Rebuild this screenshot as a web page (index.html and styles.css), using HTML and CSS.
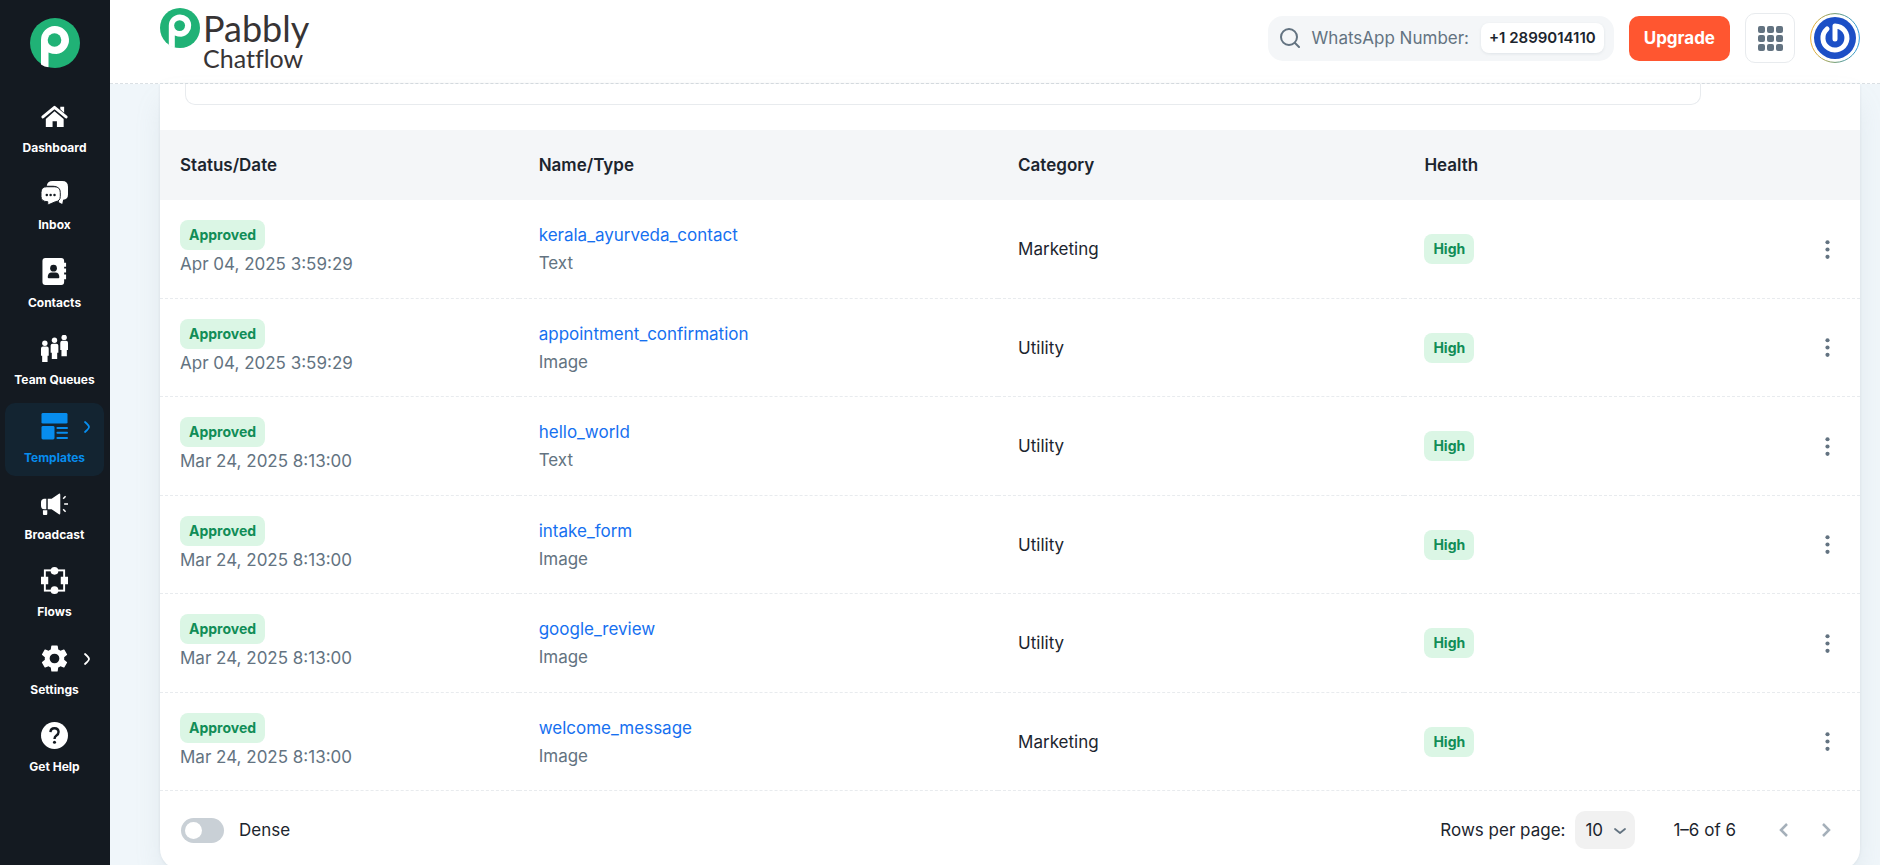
FILE: index.html
```html
<!DOCTYPE html>
<html lang="en">
<head>
  <meta charset="UTF-8">
  <meta name="viewport" content="width=device-width, initial-scale=1.0">
  <title>Templates | Pabbly Chatflow</title>
  <link rel="stylesheet" href="styles.css">
</head>
<body>
  <svg class="defs" width="0" height="0" aria-hidden="true">
    <symbol id="pabbly" viewBox="0 0 50 50">
      <circle cx="25" cy="25" r="25" fill="#20b276"/>
      <path d="M11 22v24.500q3.500 2.600 7.500 2.800V34.500q3.500 1.500 8 1.500A14 14 0 1 0 11 22z" fill="#fff"/>
      <circle cx="24.500" cy="22" r="6.800" fill="#20b276"/>
    </symbol>
    <symbol id="dots" viewBox="0 0 24 24">
      <circle cx="12" cy="5" r="2"/><circle cx="12" cy="12" r="2"/><circle cx="12" cy="19" r="2"/>
    </symbol>
    <symbol id="chevron" viewBox="0 0 8 14">
      <path d="M2 2q4 3.500 4 5t-4 5" fill="none" stroke="currentColor" stroke-width="1.800" stroke-linecap="round"/>
    </symbol>
  </svg>

  <aside class="sidebar">
    <a class="brand" href="#" aria-label="Pabbly"><svg width="50" height="50"><use href="#pabbly"/></svg></a>
    <nav class="nav">
      <a class="nav-item" href="#">
        <svg class="nav-icon" viewBox="0 0 28 28"><path d="M20 4h4v6l-4-3.500z"/><path d="M2 14.500 14 4.500l12 10" fill="none" stroke="currentColor" stroke-width="3" stroke-linecap="round" stroke-linejoin="round"/><path d="M14 8.500 23.500 16.500V25h-7v-6h-4.500v6H5v-8.500z"/></svg>
        <span>Dashboard</span>
      </a>
      <a class="nav-item" href="#">
        <svg class="nav-icon" viewBox="0 0 28 28"><path d="M6 6q.5-5 6-5h10q6 0 6 6v8q0 5-5 5.500l-1 4.500-3.500-2V12q0-6-6-6z"/><path class="cut" d="M6 7h8q6 0 6 6v4q0 5-5 5.500l-8 3.500v-3.500q-7 0-7-5.500v-4q0-6 6-6z"/><g class="cutout"><circle cx="6" cy="15.500" r="1.300"/><circle cx="10" cy="15.500" r="1.300"/><circle cx="14" cy="15.500" r="1.300"/></g></svg>
        <span>Inbox</span>
      </a>
      <a class="nav-item" href="#">
        <svg class="nav-icon" viewBox="0 0 28 28"><path d="M4.500 0H21q3 0 3 3v2h2v4h-2v2h2v4h-2v2h2v5h-2v3q0 3-3 3H4.500Q1.500 28 1.500 25V3q0-3 3-3z"/><g class="cutout"><circle cx="13" cy="10.500" r="3.500"/><path d="M7 20q0-5 4-5h4q4 0 4 5 0 1-1 1H8q-1 0-1-1z"/></g></svg>
        <span>Contacts</span>
      </a>
      <a class="nav-item" href="#">
        <svg class="nav-icon" viewBox="0 0 28 28"><g id="person"><circle cx="4" cy="8.500" r="2.800"/><path d="M2 12h4q2 0 2 2v7.500H6.800V28H1.200v-6.500H0V14q0-2 2-2z"/></g><use href="#person" x="10" y="-3"/><use href="#person" x="20" y="-6"/></svg>
        <span>Team Queues</span>
      </a>
      <a class="nav-item active" href="#" aria-current="page">
        <svg class="nav-icon" viewBox="0 0 28 28"><rect x=".5" width="27" height="11" rx="1.500"/><rect x=".5" y="13.500" width="13.500" height="14" rx="1.500"/><path d="M17 15.500h10M17 20.500h10M17 26h10" fill="none" stroke="currentColor" stroke-width="2" stroke-linecap="round"/></svg>
        <span>Templates</span>
        <svg class="nav-arrow"><use href="#chevron"/></svg>
      </a>
      <a class="nav-item" href="#">
        <svg class="nav-icon" viewBox="0 0 28 28"><path d="M19 3.500q1 0 1 1.500v19q0 1.500-1 1.500L11 20H7V9h4zM5.500 9v11H3q-3-.5-3-4v-3q0-3.500 3-4zM2 21h4.500v4q0 1-1 1H3q-1 0-1-1z"/><path d="M24 14.500h4M23 9l2.500-2.500M23 20l2.500 2.500" stroke="currentColor" stroke-width="1.600"/></svg>
        <span>Broadcast</span>
      </a>
      <a class="nav-item" href="#">
        <svg class="nav-icon" viewBox="0 0 28 28"><rect x="4" y="3.500" width="20" height="21" fill="none" stroke="currentColor" stroke-width="2"/><circle cx="14" cy="4" r="4"/><circle cx="14" cy="24" r="4"/><path d="M0 10h7.500v8H0zM20.500 10H28v8h-7.500z"/></svg>
        <span>Flows</span>
      </a>
      <a class="nav-item" href="#">
        <svg class="nav-icon" viewBox="2 2 20 20"><path d="M19.140 12.940c.04-.3.060-.61.060-.94 0-.32-.02-.64-.07-.94l2.030-1.580a.49.490 0 0 0 .12-.61l-1.920-3.320a.488.488 0 0 0-.59-.22l-2.390.96c-.5-.38-1.030-.7-1.620-.94l-.36-2.540a.484.484 0 0 0-.48-.41h-3.840c-.24 0-.43.170-.47.410l-.36 2.540c-.59.240-1.130.57-1.620.94l-2.390-.96c-.22-.08-.47 0-.59.220L2.740 8.870c-.12.210-.08.470.12.610l2.030 1.580c-.05.3-.09.630-.09.940s.02.640.07.940l-2.030 1.580a.49.490 0 0 0-.12.610l1.920 3.320c.12.220.37.290.59.220l2.390-.96c.5.380 1.030.7 1.620.94l.36 2.540c.05.240.24.410.48.410h3.840c.24 0 .44-.17.470-.41l.36-2.540c.59-.24 1.130-.56 1.620-.94l2.390.96c.22.080.47 0 .59-.22l1.920-3.320c.12-.22.070-.47-.12-.61zM12 15.600A3.600 3.600 0 1 1 12 8.400a3.600 3.600 0 0 1 0 7.200z"/></svg>
        <span>Settings</span>
        <svg class="nav-arrow"><use href="#chevron"/></svg>
      </a>
      <a class="nav-item" href="#">
        <svg class="nav-icon" viewBox="0 0 28 28"><circle cx="14" cy="14" r="14"/><path class="question" d="M9.800 10.500Q10 6.500 14 6.500t4.200 3.800q0 2.200-2.200 3.600-2 1.400-2 3.600"/><circle class="cutout" cx="14" cy="21" r="1.600"/></svg>
        <span>Get Help</span>
      </a>
    </nav>
  </aside>

  <div class="page">
    <header class="topbar">
      <a class="logo" href="#">
        <svg width="40" height="40"><use href="#pabbly"/></svg>
        <span class="logo-text"><span class="logo-name">Pabbly</span><span class="logo-product">Chatflow</span></span>
      </a>
      <div class="actions">
        <button class="number" type="button">
          <svg class="search" width="20" height="20" viewBox="0 0 20 20"><circle cx="9" cy="9" r="8"/><path d="m15 15 4 4"/></svg>
          <span>WhatsApp Number:</span>
          <b class="number-value">+1 2899014110</b>
        </button>
        <button class="upgrade" type="button">Upgrade</button>
        <button class="apps" type="button" aria-label="Apps">
          <svg width="25" height="25" viewBox="0 0 25 25"><g id="apps-row"><rect width="7" height="7" rx="2"/><rect x="9" width="7" height="7" rx="2"/><rect x="18" width="7" height="7" rx="2"/></g><use href="#apps-row" y="9"/><use href="#apps-row" y="18"/></svg>
        </button>
        <button class="avatar" type="button" aria-label="Account">
          <svg width="50" height="50" viewBox="0 0 50 50">
            <defs><linearGradient id="ring"><stop offset="0" stop-color="#f3b234"/><stop offset=".5" stop-color="#6d9a70"/><stop offset="1" stop-color="#2f9be0"/></linearGradient></defs>
            <circle cx="25" cy="25" r="24.400" fill="#fff" stroke="url(#ring)"/>
            <circle cx="25" cy="25" r="21" fill="#1c4fc6"/>
            <path d="M25 26V13A12 12 0 1 1 17 16" fill="none" stroke="#fff" stroke-width="5" stroke-linecap="round" stroke-linejoin="round"/>
          </svg>
        </button>
      </div>
    </header>

    <main class="content">
      <section class="card">
        <div class="filters"></div>
        <table class="templates">
          <thead>
            <tr>
              <th class="col-status">Status/Date</th>
              <th class="col-name">Name/Type</th>
              <th class="col-category">Category</th>
              <th colspan="2">Health</th>
            </tr>
          </thead>
          <tbody>
            <tr>
              <td><span class="label">Approved</span><div class="muted">Apr 04, 2025 3:59:29</div></td>
              <td><a href="#">kerala_ayurveda_contact</a><div class="muted">Text</div></td>
              <td>Marketing</td>
              <td><span class="label">High</span></td>
              <td><button class="menu" type="button" aria-label="More"><svg><use href="#dots"/></svg></button></td>
            </tr>
            <tr>
              <td><span class="label">Approved</span><div class="muted">Apr 04, 2025 3:59:29</div></td>
              <td><a href="#">appointment_confirmation</a><div class="muted">Image</div></td>
              <td>Utility</td>
              <td><span class="label">High</span></td>
              <td><button class="menu" type="button" aria-label="More"><svg><use href="#dots"/></svg></button></td>
            </tr>
            <tr>
              <td><span class="label">Approved</span><div class="muted">Mar 24, 2025 8:13:00</div></td>
              <td><a href="#">hello_world</a><div class="muted">Text</div></td>
              <td>Utility</td>
              <td><span class="label">High</span></td>
              <td><button class="menu" type="button" aria-label="More"><svg><use href="#dots"/></svg></button></td>
            </tr>
            <tr>
              <td><span class="label">Approved</span><div class="muted">Mar 24, 2025 8:13:00</div></td>
              <td><a href="#">intake_form</a><div class="muted">Image</div></td>
              <td>Utility</td>
              <td><span class="label">High</span></td>
              <td><button class="menu" type="button" aria-label="More"><svg><use href="#dots"/></svg></button></td>
            </tr>
            <tr>
              <td><span class="label">Approved</span><div class="muted">Mar 24, 2025 8:13:00</div></td>
              <td><a href="#">google_review</a><div class="muted">Image</div></td>
              <td>Utility</td>
              <td><span class="label">High</span></td>
              <td><button class="menu" type="button" aria-label="More"><svg><use href="#dots"/></svg></button></td>
            </tr>
            <tr>
              <td><span class="label">Approved</span><div class="muted">Mar 24, 2025 8:13:00</div></td>
              <td><a href="#">welcome_message</a><div class="muted">Image</div></td>
              <td>Marketing</td>
              <td><span class="label">High</span></td>
              <td><button class="menu" type="button" aria-label="More"><svg><use href="#dots"/></svg></button></td>
            </tr>
          </tbody>
        </table>
        <footer class="table-footer">
          <label class="dense"><input class="switch" type="checkbox">Dense</label>
          <div class="pagination">
            <label for="rows">Rows per page:</label>
            <div class="select">
              <select id="rows"><option>10</option><option>25</option><option>50</option></select>
              <svg class="select-arrow" viewBox="0 0 12 6"><path d="m1 1 5 4 5-4" fill="none" stroke="currentColor" stroke-width="1.800" stroke-linecap="round" stroke-linejoin="round"/></svg>
            </div>
            <span class="range">1–6 of 6</span>
            <button class="page-btn" type="button" aria-label="Previous page" disabled><svg width="10" height="16" viewBox="0 0 10 16"><path d="M8 2 2 8l6 6"/></svg></button>
            <button class="page-btn" type="button" aria-label="Next page" disabled><svg width="10" height="16" viewBox="0 0 10 16"><path d="m2 2 6 6-6 6"/></svg></button>
          </div>
        </footer>
      </section>
    </main>
  </div>
</body>
</html>
```
FILE: styles.css
```css
* {
  box-sizing: border-box;
}

body {
  margin: 0;
  display: flex;
  height: 100vh;
  overflow: hidden;
  font-family: Inter, "Liberation Sans", sans-serif;
  font-size: 17px;
  line-height: 28px;
  color: #1c252e;
  background-color: #f0f6fa;
}

a {
  color: #1670f0;
  text-decoration: none;
}

button {
  border: none;
  padding: 0;
  background: none;
  font: inherit;
  color: #637381;
  cursor: pointer;
}

svg {
  display: block;
  fill: currentColor;
}

.defs {
  position: absolute;
}

/* sidebar */
.sidebar {
  width: 110px;
  flex-shrink: 0;
  padding: 18px 5px 0;
  color: #fff;
  background-color: #141a21;
}

.brand {
  display: flex;
  justify-content: center;
  margin-bottom: 25px;
}

.nav {
  display: flex;
  flex-direction: column;
  justify-content: space-between;
  height: 80vh;
}

.nav-item {
  position: relative;
  display: flex;
  flex-direction: column;
  align-items: center;
  gap: 8px;
  height: 73px;
  margin-right: 1px;
  padding-top: 10px;
  border-radius: 10px;
  font-size: 12px;
  font-weight: 700;
  line-height: 20px;
  color: #fff;
}

.nav-item.active {
  color: #078dee;
  background-color: #132431;
}

.nav-icon {
  width: 27px;
  height: 27px;
}

.cutout {
  fill: #141a21;
}

.cut {
  stroke: #141a21;
  stroke-width: 1;
}

.question {
  fill: none;
  stroke: #141a21;
  stroke-width: 2.5;
}

.nav-arrow {
  position: absolute;
  top: 17px;
  right: 13px;
  width: 8px;
  height: 14px;
}

/* header */
.page {
  flex: 1;
  min-width: 0;
  display: flex;
  flex-direction: column;
}

.topbar {
  display: flex;
  justify-content: space-between;
  flex-shrink: 0;
  height: 84px;
  padding: 0 20px 0 50px;
  border-bottom: 1px dashed #dbe0e4;
  background-color: #fff;
}

.logo {
  display: flex;
  gap: 3px;
  padding-top: 8px;
  color: #373435;
}

.logo-text {
  display: flex;
  flex-direction: column;
  font-family: Lato, sans-serif;
}

.logo-name {
  font-size: 36px;
  line-height: 40px;
}

.logo-product {
  font-size: 25px;
  line-height: 20px;
  font-variant-ligatures: none;
}

.actions {
  display: flex;
  align-items: center;
  gap: 15px;
  padding-bottom: 7px;
}

.number {
  display: flex;
  align-items: center;
  gap: 12px;
  height: 45px;
  padding: 0 10px 0 12px;
  border-radius: 15px;
  background-color: #f4f6f8;
}

.search {
  fill: none;
  stroke: currentColor;
  stroke-width: 2;
  stroke-linecap: round;
}

.number-value {
  padding: 0 8px;
  border-radius: 8px;
  font-size: 15px;
  font-weight: 600;
  line-height: 30px;
  color: #1c252e;
  background-color: #fff;
  box-shadow: 0 1px 3px rgba(145, 158, 171, 0.2);
}

.upgrade {
  height: 45px;
  padding: 0 15px;
  border-radius: 10px;
  font-weight: 700;
  color: #fff;
  background-color: #ff5630;
}

.apps {
  display: flex;
  align-items: center;
  justify-content: center;
  width: 50px;
  height: 50px;
  border: 1px solid #e8ebee;
  border-radius: 10px;
}

/* table card */
.content {
  padding: 0 20px 0 50px;
}

.card {
  border-radius: 0 0 20px 20px;
  background-color: #fff;
  box-shadow: 0 0 3px rgba(145, 165, 175, 0.2), 0 15px 30px -5px rgba(145, 165, 175, 0.2);
}

.filters {
  height: 21px;
  margin: 0 159px 25px 25px;
  border: 1px solid #e8ebee;
  border-top: none;
  border-radius: 0 0 10px 10px;
}

.templates {
  width: 100%;
  table-layout: fixed;
  border-collapse: separate;
  border-spacing: 0;
}

.templates th,
.templates td {
  padding: 0 20px;
  text-align: left;
}

.templates th {
  height: 70px;
  font-weight: 600;
  background-color: #f4f6f8;
}

.templates td {
  height: 99px;
  border-bottom: 1px dashed #e8ebee;
}

.templates tr:nth-child(even) td {
  height: 98px;
}

.col-status {
  width: 21.1%;
}

.col-name {
  width: 28.2%;
}

.col-category {
  width: 23.9%;
}

.muted {
  color: #637381;
}

.label {
  display: inline-block;
  padding: 0 9px;
  border-radius: 8px;
  font-size: 14px;
  font-weight: 700;
  line-height: 30px;
  color: #118d57;
  background-color: #dbf6e5;
}

.menu {
  display: block;
  margin-left: auto;
}

.menu svg {
  width: 25px;
  height: 25px;
}

/* footer */
.table-footer {
  display: flex;
  align-items: center;
  justify-content: space-between;
  height: 78px;
  padding: 0 13px 0 20px;
}

.dense {
  display: flex;
  align-items: center;
  gap: 15px;
}

.switch {
  appearance: none;
  width: 43px;
  height: 25px;
  margin: 0 0 0 1px;
  padding: 4px;
  border-radius: 13px;
  background-color: #c9d0d6;
}

.switch::before {
  content: "";
  display: block;
  width: 17px;
  height: 17px;
  border-radius: 50%;
  background-color: #fff;
}

.pagination {
  display: flex;
  align-items: center;
}

.select {
  position: relative;
  margin: 0 38px 0 10px;
}

.select select {
  appearance: none;
  width: 60px;
  height: 38px;
  padding: 0 10px;
  border: none;
  border-radius: 10px;
  font: inherit;
  color: inherit;
  background-color: #f1f1f1;
}

.select-arrow {
  position: absolute;
  top: 17px;
  right: 9px;
  width: 12px;
  height: 6px;
  color: #637381;
}

.page-btn {
  display: flex;
  justify-content: center;
  width: 42px;
  color: #a5b0ba;
}

.page-btn path {
  fill: none;
  stroke: currentColor;
  stroke-width: 2.5;
}

.range {
  margin-right: 27px;
}
```
